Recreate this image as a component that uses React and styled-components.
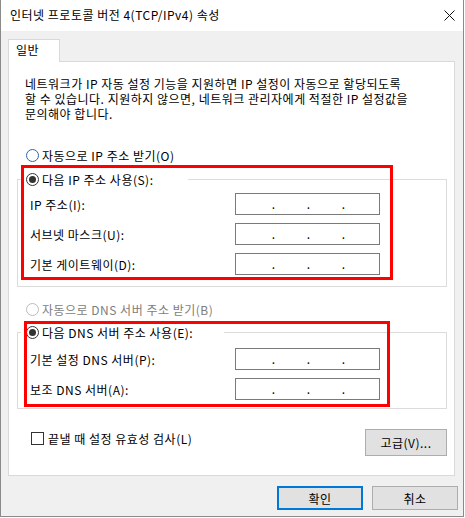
import React from "react";
import styled, { createGlobalStyle } from "styled-components";

const Global = createGlobalStyle`
  html, body { margin: 0; padding: 0; background: #ffffff; }
  body { font-family: "Noto Sans CJK KR", "Noto Sans", sans-serif; font-size: 12px; color: #000; letter-spacing: 0.5px; }
  * { box-sizing: border-box; }
`;

const Window = styled.div`
  width: 464px;
  height: 517px;
  display: flex;
  flex-direction: column;
  border: 1px solid #8a8a8a;
  border-top: none;
  background: #f0f0f0;
`;

const TitleBar = styled.div`
  height: 31px;
  background: #fff;
  display: flex;
  align-items: center;
  justify-content: space-between;
  padding: 0 8px 0 9px;
`;

const Title = styled.div`
  font-size: 12px;
  line-height: 16px;
  margin-top: -1px;
`;

const Body = styled.div`
  flex: 1;
  display: flex;
  flex-direction: column;
  padding: 8px 8px 0 7px;
`;

const TabStrip = styled.div`
  display: flex;
  height: 22px;
`;

const Tab = styled.div`
  width: 52px;
  height: 23px;
  background: #fff;
  border: 1px solid #d9d9d9;
  border-bottom: none;
  padding: 2px 0 0 7px;
  line-height: 16px;
  position: relative;
  z-index: 1;
`;

const Panel = styled.div`
  height: 415px;
  background: #fff;
  border: 1px solid #d9d9d9;
  display: flex;
  flex-direction: column;
  padding: 14px 7px 0 8px;
`;

const Description = styled.p`
  margin: 0 0 0 8px;
  line-height: 15px;
  white-space: pre-line;
`;

const OptionRow = styled.label`
  display: flex;
  align-items: center;
  height: 15px;
  gap: 3px;
  margin: ${(p) => p.$mt || 0}px 0 0 9px;
  color: ${(p) => (p.$disabled ? "#7d7d7d" : "#000")};
`;

const Radio = styled.span`
  width: 13px;
  height: 13px;
  border-radius: 50%;
  border: 1px solid ${(p) => (p.$disabled ? "#bcbcbc" : p.$checked ? "#333" : "#2a66b0")};
  background: #fff;
  display: flex;
  align-items: center;
  justify-content: center;
  flex: none;
  &::after {
    content: "";
    display: ${(p) => (p.$checked ? "block" : "none")};
    width: 7px;
    height: 7px;
    border-radius: 50%;
    background: #333;
  }
`;

const Group = styled.div`
  position: relative;
  border: 1px solid #dcdcdc;
  margin-top: ${(p) => p.$mt}px;
  padding: 0 66px ${(p) => p.$pb}px 12px;
`;

const GroupTitle = styled.label`
  display: flex;
  align-items: center;
  gap: 3px;
  width: fit-content;
  height: 16px;
  margin: -9px 0 0 -9px;
  padding: 0 ${(p) => p.$pr}px 0 5px;
  background: #fff;
`;

const Highlight = styled.div`
  position: absolute;
  border: 3px solid #ff0000;
  pointer-events: none;
`;

const Fields = styled.div`
  display: grid;
  grid-template-columns: 1fr 145px;
  row-gap: 8px;
  margin-top: ${(p) => p.$mt}px;
`;

const FieldLabel = styled.span`
  display: flex;
  align-items: center;
  height: 22px;
`;

const IpField = styled.div`
  height: 22px;
  border: 1px solid #7a7a7a;
  background: #fff;
  display: grid;
  grid-template-columns: repeat(3, 35px);
  padding-left: 4px;
  line-height: 19px;
  letter-spacing: 0;
`;

const Dot = styled.span`
  text-align: right;
`;

const Footer = styled.div`
  display: flex;
  justify-content: space-between;
  align-items: flex-start;
  margin-top: 20px;
  padding-left: 14px;
`;

const CheckRow = styled.label`
  display: flex;
  align-items: center;
  gap: 4px;
  margin-top: 3px;
  height: 13px;
`;

const Checkbox = styled.span`
  width: 13px;
  height: 13px;
  border: 1px solid #333;
  background: #fff;
  flex: none;
`;

const Button = styled.button`
  font-family: inherit;
  font-size: 12px;
  letter-spacing: 0.5px;
  color: #000;
  width: ${(p) => p.$w}px;
  height: ${(p) => p.$h}px;
  background: #e1e1e1;
  border: ${(p) => (p.$default ? "2px solid #0078d7" : "1px solid #adadad")};
  padding: 0;
  margin: 0;
`;

const ButtonBar = styled.div`
  display: flex;
  justify-content: flex-end;
  gap: 9px;
  margin: 10px -3px 0 0;
`;

function IpInput() {
  return (
    <IpField>
      <Dot>.</Dot>
      <Dot>.</Dot>
      <Dot>.</Dot>
    </IpField>
  );
}

function CloseIcon() {
  return (
    <svg width="11" height="11" viewBox="0 0 11 11">
      <path d="M0.5 0.5 L10.5 10.5 M10.5 0.5 L0.5 10.5" stroke="#111" strokeWidth="1" fill="none" />
    </svg>
  );
}

export default function App() {
  return (
    <>
      <Global />
      <Window>
        <TitleBar>
          <Title>인터넷 프로토콜 버전 4(TCP/IPv4) 속성</Title>
          <CloseIcon />
        </TitleBar>
        <Body>
          <TabStrip>
            <Tab>일반</Tab>
          </TabStrip>
          <Panel>
            <Description>
              {"네트워크가 IP 자동 설정 기능을 지원하면 IP 설정이 자동으로 할당되도록\n할 수 있습니다. 지원하지 않으면, 네트워크 관리자에게 적절한 IP 설정값을\n문의해야 합니다."}
            </Description>
            <OptionRow $mt={27}>
              <Radio />
              자동으로 IP 주소 받기(O)
            </OptionRow>
            <Group $mt={16} $pb={11}>
              <Highlight style={{ left: 3, top: -15, width: 372, height: 115 }} />
              <GroupTitle $pr={34}>
                <Radio $checked />
                다음 IP 주소 사용(S):
              </GroupTitle>
              <Fields $mt={6}>
                <FieldLabel>IP 주소(I):</FieldLabel>
                <IpInput />
                <FieldLabel>서브넷 마스크(U):</FieldLabel>
                <IpInput />
                <FieldLabel>기본 게이트웨이(D):</FieldLabel>
                <IpInput />
              </Fields>
            </Group>
            <OptionRow $mt={15} $disabled>
              <Radio $disabled />
              자동으로 DNS 서버 주소 받기(B)
            </OptionRow>
            <Group $mt={15} $pb={8}>
              <Highlight style={{ left: 6, top: -12, width: 366, height: 86 }} />
              <GroupTitle $pr={31}>
                <Radio $checked />
                다음 DNS 서버 주소 사용(E):
              </GroupTitle>
              <Fields $mt={8}>
                <FieldLabel>기본 설정 DNS 서버(P):</FieldLabel>
                <IpInput />
                <FieldLabel>보조 DNS 서버(A):</FieldLabel>
                <IpInput />
              </Fields>
            </Group>
            <Footer>
              <CheckRow>
                <Checkbox />
                끝낼 때 설정 유효성 검사(L)
              </CheckRow>
              <Button $w={82} $h={27}>고급(V)...</Button>
            </Footer>
          </Panel>
          <ButtonBar>
            <Button $default $w={86} $h={24}>확인</Button>
            <Button $w={86} $h={24}>취소</Button>
          </ButtonBar>
        </Body>
      </Window>
    </>
  );
}
